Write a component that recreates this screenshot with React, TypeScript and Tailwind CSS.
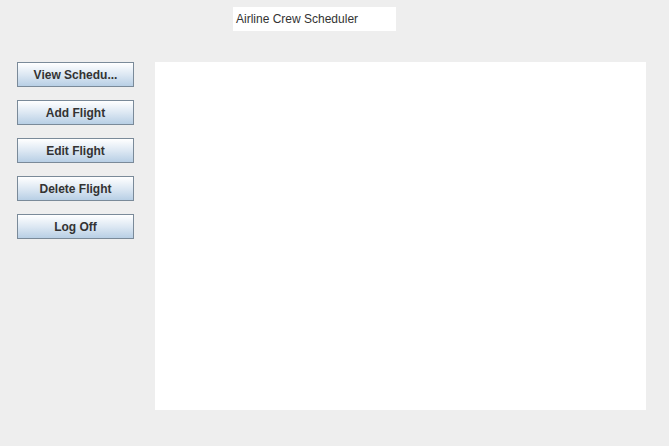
import React from "react";

const labels = ["View Schedu...", "Add Flight", "Edit Flight", "Delete Flight", "Log Off"];

export default function App() {
  return (
    <div
      className="w-[669px] h-[446px] bg-[#eeeeee] overflow-hidden"
      style={{ fontFamily: '"Liberation Sans", Arial, sans-serif' }}
    >
      <div className="pt-[7px] pl-[233px]">
        <div className="w-[163px] h-[24px] bg-white flex items-center pl-[3px] text-[12px] text-[#333333]">
          Airline Crew Scheduler
        </div>
      </div>
      <div className="flex mt-[31px] pl-[17px]">
        <div className="flex flex-col gap-[13px]">
          {labels.map((l) => (
            <div
              key={l}
              className="w-[117px] h-[25px] border border-[#7a8a99] bg-gradient-to-b from-[#ffffff] via-[#dde8f3] to-[#b8cfe5] flex items-center justify-center text-[12px] font-bold text-[#333333]"
            >
              {l}
            </div>
          ))}
        </div>
        <div className="ml-[21px] w-[491px] h-[348px] bg-white" />
      </div>
    </div>
  );
}
